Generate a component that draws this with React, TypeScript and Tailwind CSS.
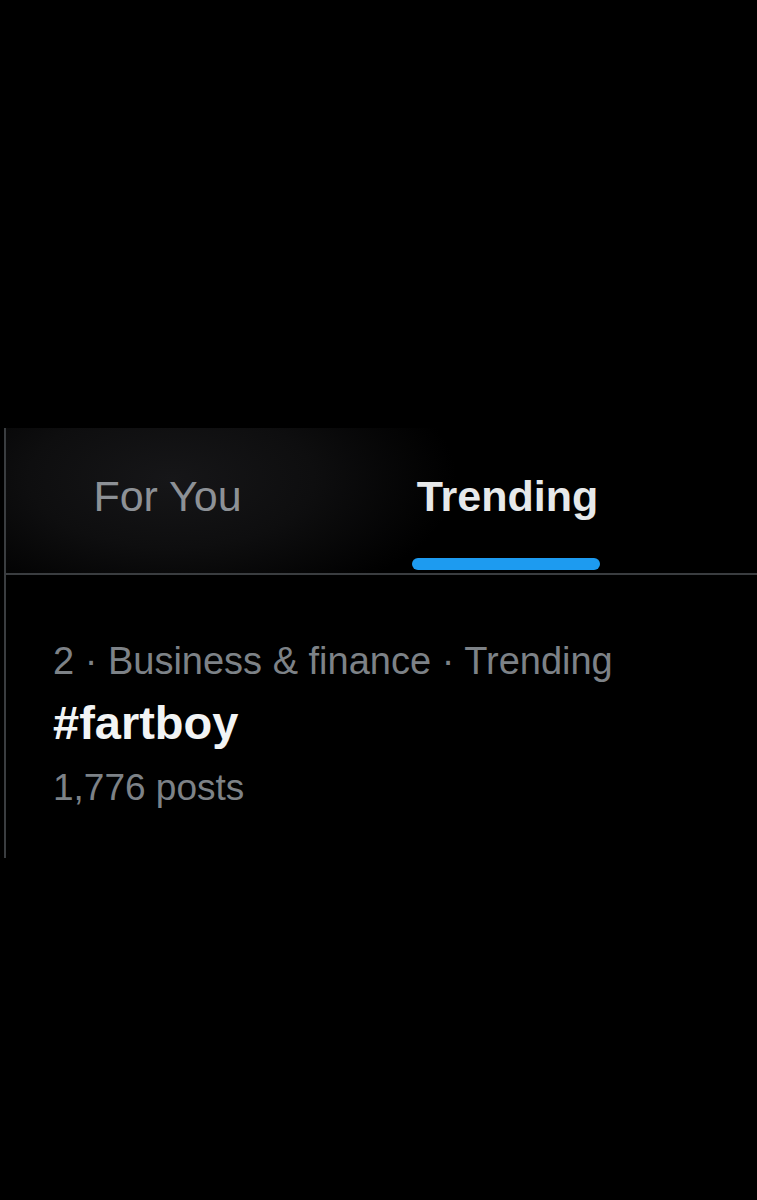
export default function App() {
  return (
    <main className="min-h-[1200px] bg-black pt-[428px] font-['Liberation_Sans',Arial,sans-serif]">
      <div className="ml-[4px] h-[430px] border-l-2 border-[#3a3d40]">
        {/* Tabs */}
        <div className="flex h-[147px] border-b-2 border-[#3a3d40] bg-[radial-gradient(ellipse_38%_95%_at_22%_35%,#161618_0%,#0e0e0f_50%,#000_100%)]">
          <div className="flex w-[323px] justify-center pt-[42px]">
            <span className="text-[43px] leading-[52px] text-[#8d9196]">For You</span>
          </div>
          <div className="relative flex w-[357px] justify-center pt-[42px]">
            <span className="text-[43px] font-bold leading-[52px] text-[#e7e9ea]">Trending</span>
            <div className="absolute bottom-[3px] left-[83px] h-[12px] w-[188px] rounded-full bg-[#1d9bf0]" />
          </div>
        </div>

        {/* Trend item */}
        <div className="pl-[47px] pt-[64px]">
          <p className="text-[38px] leading-[45px] text-[#7d8287]">2 · Business &amp; finance · Trending</p>
          <p className="mt-[12px] text-[47px] font-bold leading-[53px] text-[#f2f4f5]">#fartboy</p>
          <p className="mt-[17px] text-[37px] leading-[44px] text-[#7d8287]">1,776 posts</p>
        </div>
      </div>
    </main>
  )
}
